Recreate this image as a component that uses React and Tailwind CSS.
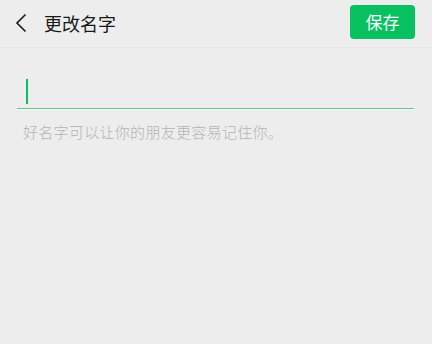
import React from 'react';

const App = () => {
    return (
        <div
            className="w-[432px] h-[344px] bg-[#ededed] text-[#191919]"
            style={{ fontFamily: '"Noto Sans CJK SC", "Noto Sans", sans-serif' }}
        >
            {/* Header */}
            <div className="h-[48px] flex items-center justify-between pl-[14px] pr-[17px] border-b border-[#e6e6e6]">
                <div className="flex items-center">
                    <svg width="14" height="20" viewBox="0 0 14 20" className="mt-[-1px]">
                        <path d="M11.5 1.5 L3 10 L11.5 18.5" fill="none" stroke="#191919" strokeWidth="1.6" />
                    </svg>
                    <span className="ml-[16px] text-[18px] leading-none mt-[-2px]">更改名字</span>
                </div>
                <button className="w-[65px] h-[34px] mt-[-4px] rounded-[4px] bg-[#07c160] text-white text-[17px] leading-none">
                    保存
                </button>
            </div>

            {/* Input */}
            <div className="pl-[17px] pr-[18px] pt-[31px]">
                <div className="h-[29px] flex items-start pl-[9px]">
                    <span className="block w-[2px] h-[25px] bg-[#07c160]"></span>
                </div>
                <div className="h-px bg-[#5cc992]"></div>
                <div className="h-px bg-[#f7f7f7]"></div>
                <p className="mt-[14px] pl-[6px] text-[15px] leading-none tracking-[0.3px] text-[#b4b4b4] font-light">
                    好名字可以让你的朋友更容易记住你。
                </p>
            </div>
        </div>
    );
};

export default App;
